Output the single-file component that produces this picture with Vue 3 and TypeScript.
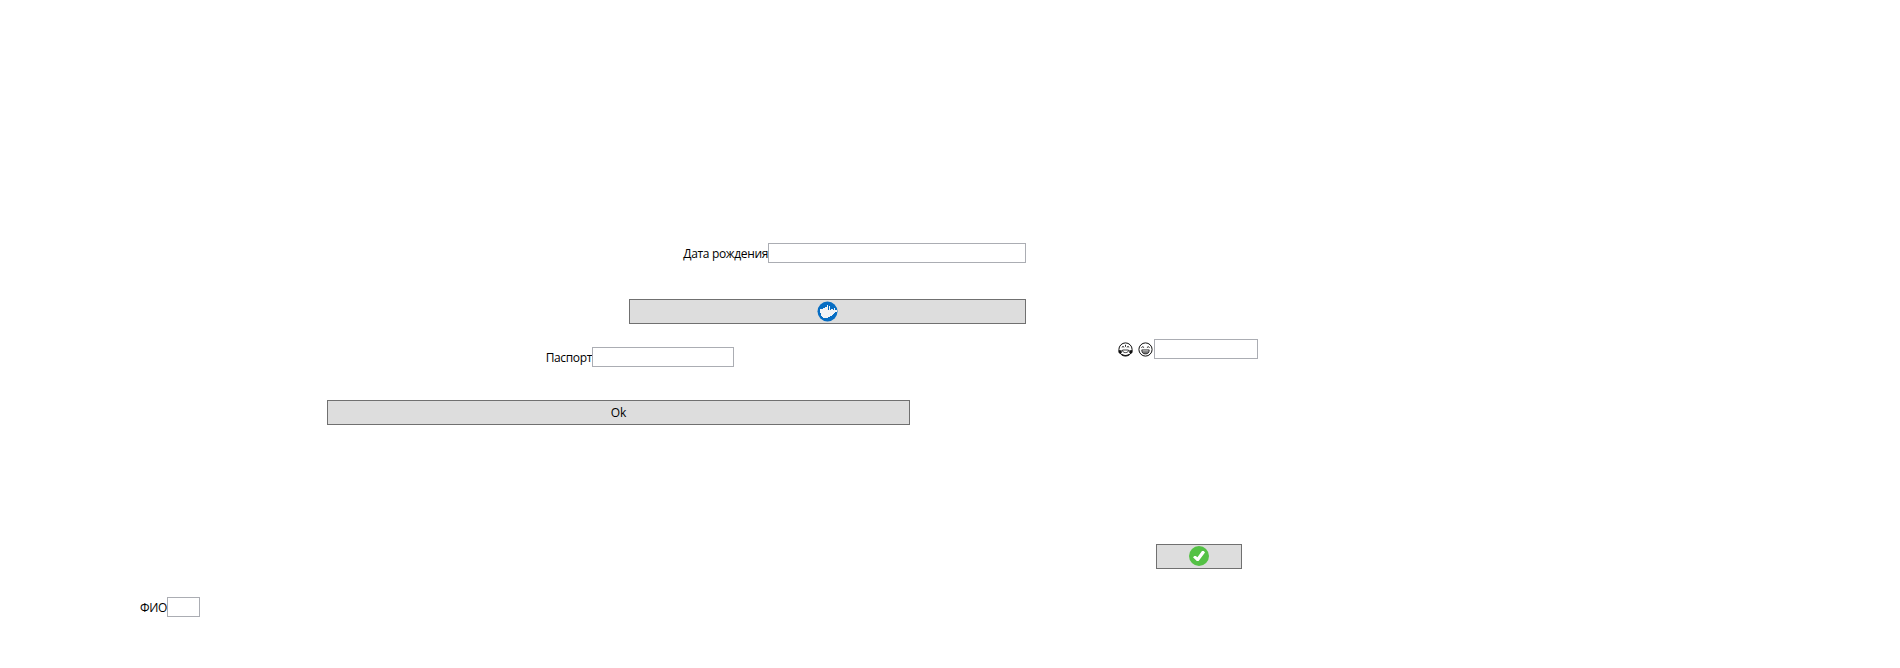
<script setup lang="ts">
import { ref } from 'vue'

const birthDate = ref('')
const passport = ref('')
const fullName = ref('')
const mood = ref('')
</script>

<template>
  <main class="window">
    <section class="person">
      <label class="field birth"><span class="caption">Дата рождения</span><input v-model="birthDate" type="text" /></label>
      <button class="docker" type="button" aria-label="Docker">
        <svg width="21" height="21" viewBox="0 0 21 21">
          <circle cx="10.5" cy="10.5" r="10" fill="#066dc3" />
          <path
            d="M3 8h3V7h2V6h2V4h1v5h1V5h1v4h1V8h2v1h1V7h1v2h2v2h-2v1h-1v1h-1v1h-1v1h-2v1h-2v1H6v-1H5v-1H4v-3H3z"
            fill="#f2f3f5"
          />
        </svg>
      </button>
      <label class="field passport"><span class="caption">Паспорт</span><input v-model="passport" type="text" /></label>
      <button class="ok" type="button"><span>Ok</span></button>
      <label class="field name"><span class="caption">ФИО</span><input v-model="fullName" type="text" /></label>
    </section>
    <section class="extra">
      <label class="field mood">
        <span class="faces">
          <svg width="15" height="15" viewBox="0 0 15 15" fill="none" stroke="#111">
            <circle cx="7.5" cy="7.5" r="6.6" stroke-width="1" />
            <path d="M3.8 5.4l1.2-1 1.2 1M8.8 5.4l1.2-1 1.2 1M7.5 2.8v2" stroke-width=".9" />
            <path d="M4.5 8h6c0 1.8-1 2.6-3 2.6s-3-.8-3-2.6z" stroke-width=".8" />
            <path d="M.5 8.3h3.2v2.8l-1.5 1L.5 10.5zM14.5 8.3h-3.2v2.8l1.5 1 1.7-1.6z" fill="#111" stroke="none" />
            <path d="M4 12.5q3.5 2 7 0" stroke-width="1.2" />
          </svg>
          <svg width="15" height="15" viewBox="0 0 15 15" fill="none" stroke="#111">
            <circle cx="7.5" cy="7.5" r="6.6" stroke-width="1" />
            <path d="M3.4 5.6q1.3-1.8 2.7 0M8.9 5.6q1.3-1.8 2.7 0" stroke-width=".9" />
            <path d="M3.8 7.9h7.4c0 2.8-1.2 4-3.7 4s-3.7-1.2-3.7-4z" fill="#777" stroke-width=".8" />
            <path d="M4.5 8.8h6" stroke="#ddd" stroke-width=".8" />
          </svg>
        </span>
        <input v-model="mood" type="text" />
      </label>
      <button class="confirm" type="button" aria-label="✓">
        <svg width="20" height="20" viewBox="0 0 20 20">
          <circle cx="10" cy="10" r="10" fill="#54c145" />
          <path d="M4 11.2L5.4 10h1.4l1.6 1.2L13 5h1.8l1.2 1.4L9.6 15H7.8z" fill="#fff" />
        </svg>
      </button>
    </section>
  </main>
</template>

<style>
body {
  margin: 0;
  background: #fff;
}
</style>

<style scoped>
.window {
  display: grid;
  grid-template-columns: 1026px 1fr;
  height: 668px;
  overflow: hidden;
  color: #000;
  font: 12px/16px 'Open Sans', 'Noto Sans', sans-serif;
}
.person,
.extra {
  display: flex;
  flex-direction: column;
  align-items: flex-start;
}
.field {
  display: flex;
  height: 20px;
  justify-content: flex-end;
}
.caption {
  padding-top: 3px;
  letter-spacing: -0.35px;
  white-space: nowrap;
}
input,
button {
  box-sizing: border-box;
  margin: 0;
  padding: 0;
  border-radius: 0;
  font: inherit;
  color: inherit;
  outline: none;
}
input {
  height: 20px;
  border: 1px solid #abadb3;
  background: #fff;
}
button {
  display: flex;
  height: 25px;
  justify-content: center;
  align-items: center;
  border: 1px solid #707070;
  background: #ddd;
}
svg {
  display: block;
  flex: none;
}
.birth {
  width: 1026px;
  margin-top: 243px;
}
.birth input {
  width: 258px;
}
.docker {
  width: 397px;
  margin: 36px 0 0 629px;
}
.docker svg {
  margin-top: -1px;
}
.passport {
  width: 734px;
  margin-top: 23px;
}
.passport input {
  width: 142px;
}
.ok {
  width: 583px;
  margin: 33px 0 0 327px;
}
.name {
  width: 200px;
  margin-top: 172px;
}
.name input {
  width: 33px;
}
.mood {
  margin: 339px 0 0 92px;
}
.faces {
  display: flex;
  gap: 5px;
  width: 36px;
  padding-top: 3px;
}
.mood input {
  width: 104px;
}
.confirm {
  width: 86px;
  margin: 185px 0 0 130px;
}
.confirm svg {
  margin-top: -1px;
}
</style>
